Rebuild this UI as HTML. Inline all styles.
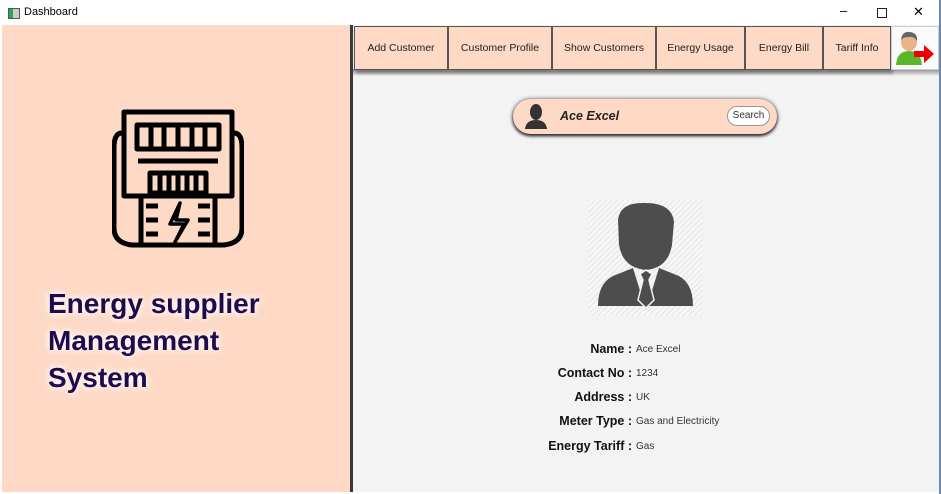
<!DOCTYPE html>
<html><head><style>
body{margin:0;width:941px;height:494px;overflow:hidden;font-family:"Liberation Sans",sans-serif;background:#fff;position:relative}
.abs{position:absolute}
.tb{left:0;top:0;width:941px;height:25px;background:#fff;font-size:11px}
.left{left:2px;top:25px;width:348px;height:467px;background:#fdd9c6}
.sep{left:350px;top:25px;width:3px;height:467px;background:#3a3a3a}
.right{left:353px;top:25px;width:586px;height:467px;background:#f3f3f3}
.nav{top:26px;height:44px;background:#fdd9c6;border:1px solid #555;box-sizing:border-box;box-shadow:2px 3px 3px #777;font-size:10.5px;color:#222;display:flex;align-items:center;justify-content:center}
.title{left:48px;top:285px;font-size:28px;font-weight:bold;color:#1f0a4e;line-height:37px;text-shadow:0 0 6px #fff,0 0 10px #fff}
.lab{width:200px;text-align:right;font-size:12.5px;font-weight:bold;color:#111;left:432px}
.val{left:636px;font-size:10px;color:#333}
</style></head><body>
<div class="abs tb"><div class="abs" style="left:8px;top:8px;width:10px;height:9px;border:1px solid #555;background:linear-gradient(90deg,#2a5 0 40%,#ccc 40%)"></div><span class="abs" style="left:24px;top:6px">Dashboard</span>
<span class="abs" style="left:840px;top:3px;font-size:13px">–</span><div class="abs" style="left:877px;top:8px;width:8px;height:8px;border:1px solid #222"></div><span class="abs" style="left:913px;top:4px;font-size:13px">✕</span></div>
<div class="abs left"></div><div class="abs sep"></div><div class="abs right"></div>
<div class="abs" style="left:353px;top:69px;width:586px;height:7px;background:linear-gradient(#8a8a8a,#f3f3f3)"></div>
<div class="abs" style="left:939px;top:0;width:2px;height:494px;background:#6a8ab0"></div>
<svg class="abs" style="left:112px;top:108px" width="132" height="140" viewBox="0 0 132 140" fill="none" stroke="#000" stroke-width="5" stroke-linejoin="round">
<path d="M10 25 Q2 25 2 40 V120 Q2 135 20 137 H112 Q130 135 130 120 V40 Q130 25 122 25"/>
<rect x="12" y="4" width="108" height="84"/>
<rect x="25" y="17" width="82" height="24"/>
<path d="M39 17V41M52 17V41M66 17V41M80 17V41M93 17V41"/>
<path d="M26 53H106"/>
<rect x="38" y="65" width="56" height="20"/>
<path d="M48 65V85M57 65V85M66 65V85M75 65V85M84 65V85"/>
<path d="M29 88V137M103 88V137"/>
<path d="M34 98H46M34 112H46M34 126H46M86 98H98M86 112H98M86 126H98"/>
<path d="M68 95 L58 116 H72 L63 134 L76 112 H64 Z" stroke-width="3.5"/>
</svg>
<div class="abs title">Energy supplier<br>Management<br>System</div>
<div class="abs nav" style="left:354px;width:94px">Add Customer</div>
<div class="abs nav" style="left:448px;width:104px">Customer Profile</div>
<div class="abs nav" style="left:552px;width:104px">Show Customers</div>
<div class="abs nav" style="left:656px;width:89px">Energy Usage</div>
<div class="abs nav" style="left:745px;width:78px">Energy Bill</div>
<div class="abs nav" style="left:823px;width:68px">Tariff Info</div>
<div class="abs" style="left:891px;top:26px;width:48px;height:44px;background:#fafafa;border:1px solid #ccc;box-sizing:border-box"></div>
<svg class="abs" style="left:894px;top:29px" width="42" height="38" viewBox="0 0 42 38"><ellipse cx="15" cy="13" rx="8" ry="9" fill="#e8b48a"/><path d="M7 11 Q8 2 16 3 Q24 4 23 12 Q20 7 15 8 Q9 8 7 11Z" fill="#666"/><path d="M2 36 Q3 22 15 22 Q27 22 28 36Z" fill="#5db52b"/><path d="M20 22H30V16L40 25L30 34V28H20Z" fill="#e00"/></svg>
<div class="abs" style="left:513px;top:99px;width:264px;height:35px;border-radius:18px;background:#fdd9c6;box-shadow:0 2px 3px #222,0 0 4px #666"></div>
<svg class="abs" style="left:524px;top:103px" width="24" height="26" viewBox="0 0 24 26"><ellipse cx="12" cy="9" rx="6" ry="8" fill="#333"/><path d="M1 26 Q2 17 12 17 Q22 17 23 26Z" fill="#333"/></svg>
<div class="abs" style="left:560px;top:109px;font-size:12.5px;font-weight:bold;font-style:italic;color:#222">Ace Excel</div>
<div class="abs" style="left:727px;top:106px;width:43px;height:20px;border-radius:10px;background:#fff;border:1px solid #999;box-sizing:border-box;font-size:10px;text-align:center;line-height:18px;color:#333">Search</div>
<div class="abs" style="left:588px;top:200px;width:115px;height:116px;background:repeating-linear-gradient(135deg,#ececec 0 2px,#f8f8f8 2px 4px)"></div>
<svg class="abs" style="left:588px;top:200px" width="115" height="116" viewBox="0 0 115 116"><path d="M30 20 Q32 2 57 3 Q84 3 86 22 L84 45 Q80 68 58 70 Q35 68 31 45Z" fill="#4d4d4d"/><path d="M10 106 Q10 80 30 74 L45 68 L58 110 L71 68 L86 74 Q105 80 105 106Z" fill="#4d4d4d"/><path d="M52 74 L58 70 L64 74 L61 80 L66 100 L58 108 L50 100 L55 80Z" fill="#4d4d4d" stroke="#f3f3f3" stroke-width="1.5"/></svg>
<div class="abs lab" style="top:342px">Name :</div><div class="abs val" style="top:344px">Ace Excel</div>
<div class="abs lab" style="top:366px">Contact No :</div><div class="abs val" style="top:368px">1234</div>
<div class="abs lab" style="top:390px">Address :</div><div class="abs val" style="top:392px">UK</div>
<div class="abs lab" style="top:414px">Meter Type :</div><div class="abs val" style="top:416px">Gas and Electricity</div>
<div class="abs lab" style="top:439px">Energy Tariff :</div><div class="abs val" style="top:441px">Gas</div>
</body></html>
